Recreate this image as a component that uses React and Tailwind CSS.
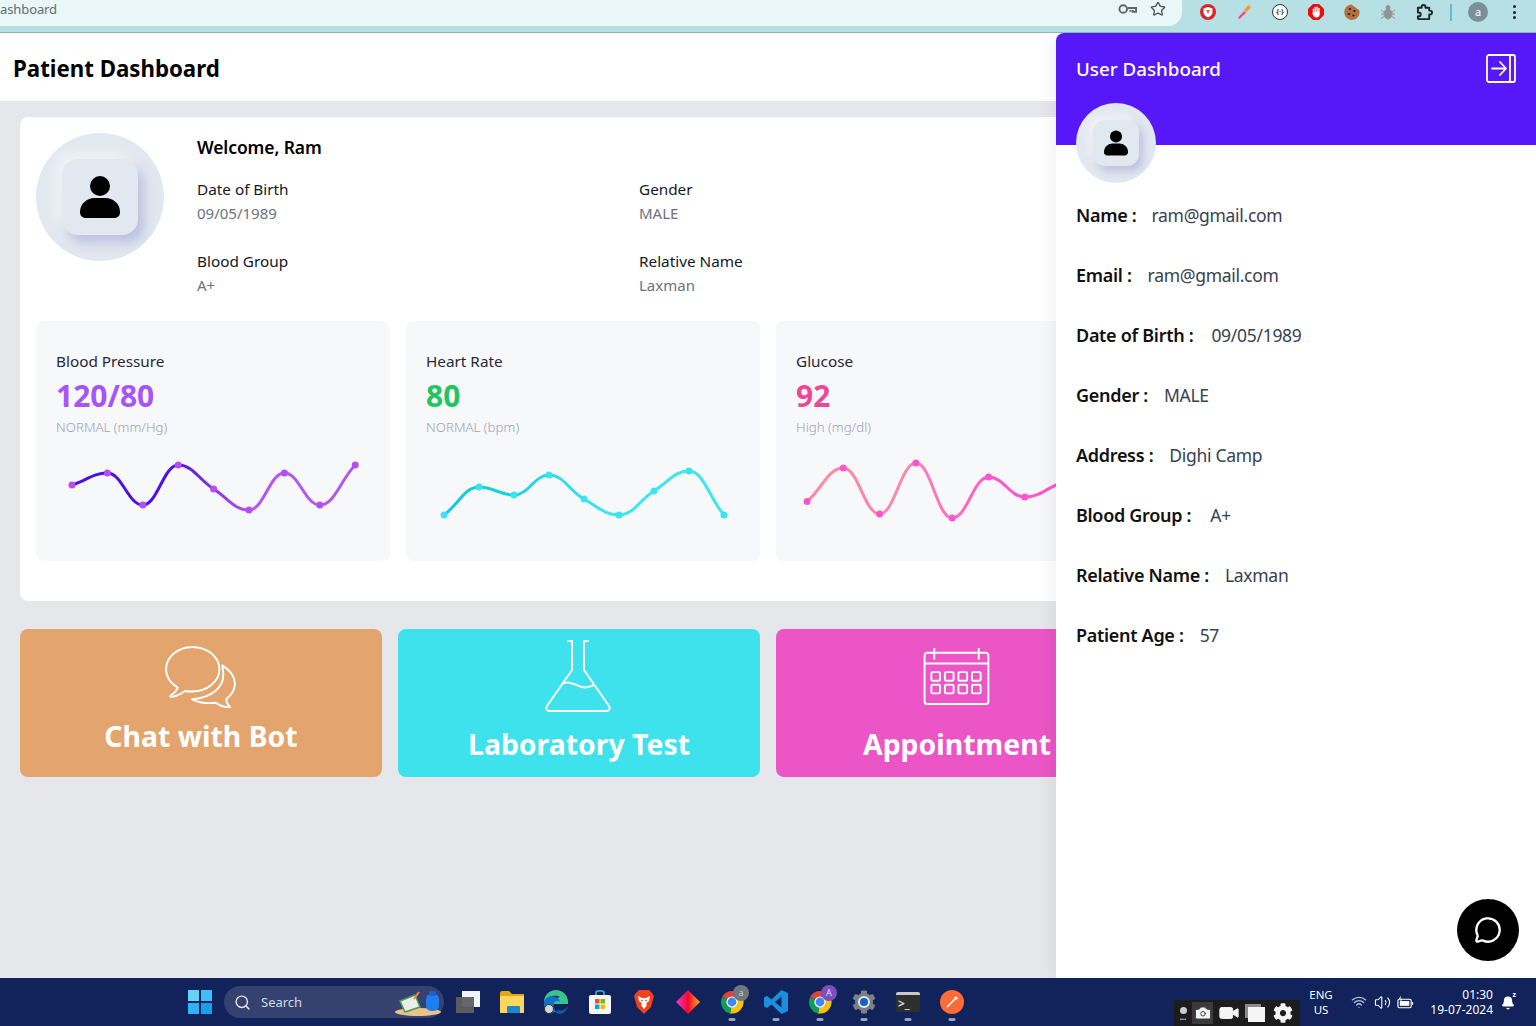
import React from "react";
import { Star, Search, MessageCircle, Video, Camera, Volume2, Wifi, Bell } from "lucide-react";
import { FaCog } from "react-icons/fa";

function smooth(pts) {
  const n = pts.length;
  const d = [];
  const s = [];
  for (let i = 0; i < n - 1; i++) s.push((pts[i + 1][1] - pts[i][1]) / (pts[i + 1][0] - pts[i][0]));
  for (let i = 0; i < n; i++) {
    if (i === 0) d.push(s[0] * 0.9);
    else if (i === n - 1) d.push(s[n - 2] * 0.9);
    else if (s[i - 1] * s[i] <= 0) d.push(0);
    else d.push((2 * s[i - 1] * s[i]) / (s[i - 1] + s[i]));
  }
  let p = `M${pts[0][0]} ${pts[0][1]}`;
  for (let i = 0; i < n - 1; i++) {
    const h = (pts[i + 1][0] - pts[i][0]) / 2.4;
    p += ` C${pts[i][0] + h} ${pts[i][1] + d[i] * h} ${pts[i + 1][0] - h} ${pts[i + 1][1] - d[i + 1] * h} ${pts[i + 1][0]} ${pts[i + 1][1]}`;
  }
  return p;
}

function Spark({ id, ys, x0, step, from, mid, to, dot, midAt = "0.35", endAt = "1" }) {
  const pts = ys.map((y, i) => [x0 + i * step, y - 450]);
  return (
    <svg width="314" height="80" viewBox="0 0 314 80" className="block overflow-visible mt-[13px]">
      <defs>
        <linearGradient id={id} gradientUnits="userSpaceOnUse" x1="0" x2="314" y1="0" y2="0">
          <stop offset="0" stopColor={from} />
          <stop offset={midAt} stopColor={mid} />
          <stop offset={endAt} stopColor={to} />
        </linearGradient>
      </defs>
      <path d={smooth(pts)} fill="none" stroke={`url(#${id})`} strokeWidth="3" strokeLinecap="round" />
      {pts.map((p, i) => (
        <circle key={i} cx={p[0]} cy={p[1]} r="3.5" fill={dot} />
      ))}
    </svg>
  );
}

function Person({ className }) {
  return (
    <svg viewBox="0 0 40 42" className={className} fill="#000">
      <circle cx="20" cy="10" r="10" />
      <path d="M0 36 C0 27 8 22 14 22 H26 C32 22 40 27 40 36 C40 39.5 38 42 34 42 H6 C2 42 0 39.5 0 36Z" />
    </svg>
  );
}

function Metric({ title, value, valueClass, note, children }) {
  return (
    <div className="h-[240px] rounded-lg bg-[#f7f8fa] px-5 pt-[28px]">
      <div className="text-[15.3px] leading-6 text-[#1f2937]">{title}</div>
      <div className={`text-[30px] leading-9 font-bold mt-[5px] ${valueClass}`}>{value}</div>
      <div className="text-[13.3px] leading-5 font-light text-[#9ca3af] mt-[3px]">{note}</div>
      {children}
    </div>
  );
}

function Field({ label, value }) {
  return (
    <div className="w-[442px]">
      <div className="text-[15.3px] leading-6 text-[#111827]">{label}</div>
      <div className="text-[15px] leading-6 text-[#6b7280]">{value}</div>
    </div>
  );
}

function Row({ label, value, gap = "ml-4" }) {
  return (
    <div className="h-[60px] flex items-center">
      <span className="font-semibold text-[18px] tracking-[-0.3px] text-[#111]">{label}</span>
      <span className={`text-[#374151] text-[17.5px] tracking-[-0.3px] ${gap}`}>{value}</span>
    </div>
  );
}

function Dot() {
  return <span className="absolute left-1/2 -translate-x-1/2 bottom-[5px] w-[7px] h-[3px] rounded-full bg-[#9aa3bd]" />;
}

function Slot({ children, dot }) {
  return (
    <div className="relative w-[44px] h-[48px] flex items-center justify-center">
      {children}
      {dot && <Dot />}
    </div>
  );
}

function Chrome({ badge, badgeClass }) {
  return (
    <div className="relative w-6 h-6">
      <svg viewBox="0 0 24 24" className="w-6 h-6">
        <path d="M12 12 L2.2 7 A11.5 11.5 0 0 1 22.3 7Z" fill="#db4437" />
        <path d="M12 12 L22.3 7 A11.5 11.5 0 0 1 10 23.4Z" fill="#f4c20d" />
        <path d="M12 12 L10 23.4 A11.5 11.5 0 0 1 2.2 7Z" fill="#0f9d58" />
        <circle cx="12" cy="12" r="5.6" fill="#fff" />
        <circle cx="12" cy="12" r="4.4" fill="#4285f4" />
      </svg>
      <span className={`absolute -top-[5px] -right-[5px] w-4 h-4 rounded-full text-[9px] leading-4 text-center ${badgeClass}`}>{badge}</span>
    </div>
  );
}

function BrowserBar() {
  return (
    <div className="h-[33px] shrink-0 bg-[#b7e0e4] border-b border-[#8fb5b8] flex items-start">
      <div className="w-[1182px] h-[26px] bg-[#eaf7f8] rounded-br-[14px] flex items-start justify-between pr-[16px]">
        <span className="text-[13px] leading-[19px] text-[#5f6d70] tracking-[-0.1px]">ashboard</span>
        <div className="flex items-center gap-[13px] h-[18px]">
          <svg viewBox="0 0 20 12" className="w-[19px] h-[12px]" fill="none" stroke="#5f6368" strokeWidth="2">
            <circle cx="5.5" cy="6" r="4" />
            <path d="M10 5 H19 V9 H15.5 V7 M13 7 V9" />
          </svg>
          <Star size={16} strokeWidth={2} color="#4f5458" />
        </div>
      </div>
      <div className="flex-1 h-[33px] flex items-center pl-[8px] pb-[9px]">
        <div className="w-[36px] flex justify-center">
          <svg viewBox="0 0 16 16" className="w-4 h-4">
            <circle cx="8" cy="8" r="8" fill="#d9252b" />
            <path d="M3.500 4.500 L8 3 L12.500 4.500 V8.500 C12.500 10.500 10 12.500 8 13.500 C6 12.500 3.500 10.500 3.500 8.500Z" fill="#fff" />
            <path d="M6 6 H10 L8 10Z" fill="#e25a5e" />
          </svg>
        </div>
        <div className="w-[36px] flex justify-center">
          <svg viewBox="0 0 16 16" className="w-4 h-4">
            <path d="M2.500 13 L8 7 L10 9 L4 14.500 L2.500 15Z" fill="#f7468f" />
            <path d="M8 6 L11.500 2 C13 0.500 15.500 3 14 4.500 L10 8.500Z" fill="#f59b1f" />
          </svg>
        </div>
        <div className="w-[36px] flex justify-center">
          <div className="w-4 h-4 rounded-full bg-white border border-[#333] text-[7px] leading-[13px] text-center font-bold text-[#333]">{"{·}"}</div>
        </div>
        <div className="w-[36px] flex justify-center">
          <svg viewBox="0 0 16 16" className="w-4 h-4">
            <path d="M5 0 H11 L16 5 V11 L11 16 H5 L0 11 V5Z" fill="#e60f0f" />
            <g fill="#fff">
              <rect x="4.800" y="4.500" width="1.400" height="6" rx="0.700" />
              <rect x="6.600" y="2.800" width="1.400" height="7" rx="0.700" />
              <rect x="8.400" y="2.500" width="1.400" height="7" rx="0.700" />
              <rect x="10.200" y="3.800" width="1.400" height="6" rx="0.700" />
              <path d="M4.800 8 H11.600 V10.500 C11.600 12.500 10.500 13.500 8.500 13.500 C6.500 13.500 5.500 12.500 4.800 10.500Z" />
            </g>
          </svg>
        </div>
        <div className="w-[36px] flex justify-center">
          <svg viewBox="0 0 16 16" className="w-4 h-4">
            <path d="M8 0.500 C9 3 11 2 11.500 3.500 C12 5 15 4.500 15.500 7 A7.700 7.700 0 1 1 8 0.500Z" fill="#b5703f" />
            <g fill="#231a14">
              <circle cx="6" cy="5" r="1.100" /><circle cx="10.500" cy="7" r="1.100" /><circle cx="5" cy="10" r="1.100" /><circle cx="9.500" cy="11.500" r="1.100" />
            </g>
          </svg>
        </div>
        <div className="w-[36px] flex justify-center">
          <svg viewBox="0 0 16 16" className="w-4 h-4" stroke="#8f9597" strokeWidth="1" fill="#8f9597">
            <ellipse cx="8" cy="10" rx="4" ry="5" />
            <circle cx="8" cy="3.500" r="2" />
            <path d="M1 6 L4 8 M1 10 H4 M1 14.500 L4 12.500 M15 6 L12 8 M15 10 H12 M15 14.500 L12 12.500" fill="none" />
          </svg>
        </div>
        <div className="w-[36px] flex justify-center">
          <svg viewBox="0 0 18 18" className="w-[17px] h-[17px]" fill="none" stroke="#1c2526" strokeWidth="2" strokeLinejoin="round">
            <path d="M2 4 H6 V3 A2 2 0 0 1 10 3 V4 H14 V7 H15 A2 2 0 0 1 15 11 H14 V16 H3 Q2 16 2 15 V13 H3 A2 2 0 0 0 3 9 H2Z" />
          </svg>
        </div>
        <div className="w-[2px] h-[17px] bg-[#5ebfc8] ml-[8px]" />
        <div className="ml-[16px] w-5 h-5 rounded-full bg-[#7a8f99] text-white text-[11px] leading-5 text-center">a</div>
        <div className="ml-[25px] flex flex-col gap-[2.5px]">
          <span className="w-[3px] h-[3px] rounded-full bg-[#1c2526]" />
          <span className="w-[3px] h-[3px] rounded-full bg-[#1c2526]" />
          <span className="w-[3px] h-[3px] rounded-full bg-[#1c2526]" />
        </div>
      </div>
    </div>
  );
}

function Taskbar() {
  return (
    <div className="relative h-[48px] shrink-0 bg-[#12225b] text-white flex items-center">
      <div className="ml-[188px] w-6 h-6 grid grid-cols-2 gap-[1.5px]">
        <span className="bg-[#63d3f9]" /><span className="bg-[#3fbdf5]" /><span className="bg-[#2fb2f3]" /><span className="bg-[#1a9df0]" />
      </div>
      <div className="ml-[12px] w-[220px] h-[32px] rounded-full bg-[#35426f] flex items-center pl-[10px] relative">
        <Search size={17} color="#e5e7eb" strokeWidth={2} />
        <span className="ml-[10px] text-[13px] leading-[32px] text-[#d5d9e4]">Search</span>
        <svg viewBox="0 0 50 32" className="absolute right-0 top-0 w-[50px] h-[32px]">
          <ellipse cx="24" cy="26" rx="23" ry="4" fill="#e8c48a" />
          <path d="M6 15 L21 9 L26 21 L11 26Z" fill="#e9efe6" stroke="#4f9a55" strokeWidth="1.5" />
          <path d="M20 13 L25 6" stroke="#ef8a3c" strokeWidth="2" />
          <rect x="32" y="8" width="13" height="17" rx="5" fill="#1f7df0" />
          <rect x="35" y="5" width="7" height="5" rx="2" fill="#1b5fd0" />
        </svg>
      </div>
      <div className="ml-[2px] flex">
        <Slot>
          <div className="relative w-6 h-6">
            <span className="absolute right-0 top-[1px] w-[18px] h-[16px] bg-[#f3f4f6]" />
            <span className="absolute left-0 bottom-[1px] w-[18px] h-[16px] bg-[#5e5f62]/95" />
          </div>
        </Slot>
        <Slot>
          <svg viewBox="0 0 24 22" className="w-6 h-[22px]">
            <path d="M0 2 Q0 0 2 0 H9 L12 3 H24 V20 Q24 22 22 22 H2 Q0 22 0 20Z" fill="#e2a616" />
            <rect x="0" y="5" width="24" height="17" rx="1" fill="#fbd75b" />
            <rect x="7" y="15" width="13" height="7" rx="1" fill="#1a88d4" />
          </svg>
        </Slot>
        <Slot>
          <div className="relative w-6 h-6">
            <svg viewBox="0 0 24 24" className="w-6 h-6">
              <path d="M12 0 A12 12 0 0 1 24 12 V14 H9 C9 8 16 7 16 7 C13 5 4 5 0 12 A12 12 0 0 1 12 0Z" fill="#37c58a" />
              <path d="M0 12 C2 5 14 4 16 12 C11 9 7 14 12 22 C5 24 -1 19 0 12Z" fill="#1171c9" />
              <path d="M14 20 C18 22 22 19 24 16 C22 24 14 26 12 22Z" fill="#0f5fa8" />
            </svg>
            <span className="absolute left-[0px] bottom-[0px] w-[10px] h-[10px] rounded-full bg-[#d7d7d7] border border-[#333]" />
          </div>
        </Slot>
        <Slot>
          <svg viewBox="0 0 22 24" className="w-[22px] h-6">
            <path d="M7 6 V3 Q7 1 9 1 H13 Q15 1 15 3 V6" fill="none" stroke="#2eb4e8" strokeWidth="1.6" />
            <rect x="0" y="5" width="22" height="19" rx="2" fill="#f6f6f6" />
            <rect x="6" y="9" width="4.5" height="4.5" fill="#f25022" />
            <rect x="11.5" y="9" width="4.5" height="4.5" fill="#7fba00" />
            <rect x="6" y="14.5" width="4.5" height="4.5" fill="#00a4ef" />
            <rect x="11.5" y="14.5" width="4.5" height="4.5" fill="#ffb900" />
          </svg>
        </Slot>
        <Slot>
          <svg viewBox="0 0 20 24" className="w-5 h-6">
            <path d="M5 0 H15 L18 3 L20 6 L17 17 L10 24 L3 17 L0 6 L2 3Z" fill="#f1411f" />
            <path d="M4 6 L8 8 H12 L16 6 L15 11 L12.500 13 L12.500 16 L10 19 L7.500 16 L7.500 13 L5 11Z" fill="#fff" />
            <path d="M7 10 L9 11 M13 10 L11 11" stroke="#f1411f" strokeWidth="1" />
          </svg>
        </Slot>
        <Slot>
          <svg viewBox="0 0 24 24" className="w-6 h-6">
            <defs>
              <linearGradient id="dia" x1="0" x2="1" y1="0" y2="0">
                <stop offset="0" stopColor="#e83ed0" /><stop offset="0.5" stopColor="#f5062f" /><stop offset="1" stopColor="#ffb21a" />
              </linearGradient>
            </defs>
            <path d="M12 0 L24 12 L12 24 L0 12Z" fill="url(#dia)" />
          </svg>
        </Slot>
        <Slot dot><Chrome badge="a" badgeClass="bg-[#6f7780] text-[#c8ccd0]" /></Slot>
        <Slot dot>
          <svg viewBox="0 0 24 24" className="w-6 h-6">
            <path d="M17.5 0 L24 3 V21 L17.5 24 L7.5 14.5 L3 18 L0 16.5 V7.5 L3 6 L7.5 9.5Z M17.5 6.5 L11 12 L17.500 17.5Z" fillRule="evenodd" fill="#1c8ede" />
          </svg>
        </Slot>
        <Slot dot><Chrome badge="A" badgeClass="bg-[#7b4fc0] text-[#e4dcf5]" /></Slot>
        <Slot dot>
          <div className="relative w-6 h-6 flex items-center justify-center">
            <FaCog size={24} color="#7a8088" />
            <span className="absolute w-[12px] h-[12px] rounded-full bg-[#1663c0] border-2 border-[#e4e7eb]" />
          </div>
        </Slot>
        <Slot dot>
          <div className="w-6 h-5 rounded-[2px] bg-[#2e2e2e] border-t-[3px] border-[#c9c9c9] flex items-center pl-[2px] text-[12px] leading-none font-bold text-[#ddd]">&gt;_</div>
        </Slot>
        <Slot dot>
          <div className="w-6 h-6 rounded-full bg-[#ff6c37] flex items-center justify-center">
            <svg viewBox="0 0 16 16" className="w-4 h-4" stroke="#fff" strokeWidth="1.6" fill="none">
              <path d="M3 13 L12 4" />
              <path d="M11 3 L13 5" strokeWidth="2.4" />
            </svg>
          </div>
        </Slot>
      </div>
      <div className="ml-auto flex items-center h-full text-white">
        <div className="w-[32px] text-center text-[11.5px] leading-[15px] mr-[14px]">
          <div>ENG</div>
          <div>US</div>
        </div>
        <Wifi size={16} color="#b4c1da" strokeWidth={2} />
        <Volume2 size={17} strokeWidth={1.5} className="ml-[7px]" />
        <svg viewBox="0 0 18 13" className="w-[17px] h-[13px] ml-[6px]" fill="none" stroke="#fff" strokeWidth="1.2">
          <rect x="1" y="3" width="14" height="9" rx="1.5" />
          <rect x="3" y="5" width="10" height="5" fill="#fff" stroke="none" />
          <path d="M16.5 6 V9" />
          <path d="M4 0 L2.500 3 H5 L3.500 6" strokeWidth="1" />
        </svg>
        <div className="ml-[7px] w-[72px] text-right text-[12px] leading-[15px]">
          <div>01:30</div>
          <div>19-07-2024</div>
        </div>
        <div className="relative ml-[8px] mr-[21px] w-[14px] h-[16px]">
          <Bell size={14} strokeWidth={2} fill="#fff" className="absolute left-0 bottom-0" />
          <span className="absolute -right-[1px] -top-[3px] text-[7px] leading-[8px] font-bold">z</span>
        </div>
      </div>
      <div className="absolute left-[1174px] top-[22px] w-[126px] h-[26px] rounded-t-[3px] bg-[#1c1c1c] flex items-center">
        <div className="w-[18px] flex flex-col items-center">
          <span className="w-[7px] h-[7px] rounded-full bg-[#ccc]" />
          <span className="text-[8px] leading-[6px] text-[#ddd] font-bold">...</span>
        </div>
        <div className="w-[21px] h-[22px] bg-[#3a3a3a] flex items-center justify-center">
          <Camera size={18} color="#3a3a3a" fill="#f2f2f2" strokeWidth={1.2} />
        </div>
        <Video size={22} color="#f5f5f5" fill="#f5f5f5" strokeWidth={1} className="ml-[5px]" />
        <div className="relative w-[20px] h-[18px] ml-[5px]">
          <span className="absolute left-0 top-0 w-[16px] h-[14px] bg-[#8a8a8a]" />
          <span className="absolute right-0 bottom-0 w-[17px] h-[15px] bg-[#f5f5f5]" />
        </div>
        <FaCog size={20} color="#f5f5f5" className="ml-[8px]" />
      </div>
    </div>
  );
}

function ActionCard({ bg, label, children, top, gap }) {
  return (
    <div className={`h-[148px] rounded-lg ${bg} flex flex-col items-center ${top}`}>
      {children}
      <div className={`text-[28.4px] leading-9 font-bold text-white ${gap}`}>{label}</div>
    </div>
  );
}

export default function App() {
  return (
    <div className="h-[1026px] w-[1536px] overflow-hidden flex flex-col font-['Noto_Sans',sans-serif]">
      <BrowserBar />
      <div className="relative flex-1 min-h-0 bg-[#e5e7eb] overflow-hidden">
        <div className="h-[68px] bg-white flex items-center pl-[13px] pt-[3px]">
          <h1 className="text-[22.25px] font-bold text-black">Patient Dashboard</h1>
        </div>
        <div className="px-5 pt-4">
          <div className="h-[484px] rounded-lg bg-white p-4">
            <div className="flex h-[188px]">
              <div className="w-[128px] h-[128px] rounded-full bg-[#e2e8f0] flex items-center justify-center shrink-0 overflow-hidden">
                <div className="w-[76px] h-[76px] rounded-2xl bg-[#e2e8f0] shadow-[6px_8px_12px_rgba(150,155,210,0.5),-6px_-6px_14px_rgba(255,255,255,0.6)] flex items-center justify-center">
                  <Person className="w-10 h-[42px]" />
                </div>
              </div>
              <div className="ml-[33px] flex-1">
                <div className="text-[17.5px] leading-[28px] font-semibold text-black tracking-[-0.1px]">Welcome, Ram</div>
                <div className="flex mt-[16px]">
                  <Field label="Date of Birth" value="09/05/1989" />
                  <Field label="Gender" value="MALE" />
                </div>
                <div className="flex mt-[24px]">
                  <Field label="Blood Group" value="A+" />
                  <Field label="Relative Name" value="Laxman" />
                </div>
              </div>
            </div>
            <div className="grid grid-cols-4 gap-4">
              <Metric title="Blood Pressure" value="120/80" valueClass="text-[#a855f7]" note="NORMAL (mm/Hg)">
                <Spark id="g1" ys={[485, 473, 505, 465, 489, 510, 473, 505, 465]} x0={16} step={35.4} from="#4a10e0" mid="#4f12e2" to="#b556f0" dot="#b44ff0" midAt="0.38" endAt="0.62" />
              </Metric>
              <Metric title="Heart Rate" value="80" valueClass="text-[#22c55e]" note="NORMAL (bpm)">
                <Spark id="g2" ys={[515, 487, 495, 475, 499, 515, 491, 471, 515]} x0={18} step={35} from="#12c6d8" mid="#1fd2e2" to="#3fe6f2" dot="#3de4ef" midAt="0.3" endAt="0.6" />
              </Metric>
              <Metric title="Glucose" value="92" valueClass="text-[#ec4899]" note="High (mg/dl)">
                <Spark id="g3" ys={[501.5, 468, 514, 463, 518, 477, 497, 483]} x0={11} step={36.3} from="#ff8aa0" mid="#ff86a8" to="#ff55d0" dot="#ff55d0" midAt="0.35" endAt="0.65" />
              </Metric>
              <div />
            </div>
          </div>
          <div className="grid grid-cols-4 gap-4 mt-7">
            <ActionCard bg="bg-[#e3a56d]" label="Chat with Bot" top="pt-[15px]" gap="mt-[10px]">
              <svg viewBox="0 0 76 66" className="w-[76px] h-[64px] -translate-x-[1px]" fill="none" stroke="#fff" strokeWidth="2" strokeLinejoin="round">
                <path d="M15 45 C7 40 3 33 3 26 C3 13 16 3 30 3 C45 3 58 13 58 26 C58 39 45 49 30 49 C27 49 24.500 49 22.500 48.500 C19 51 14 54 9 54.500 C7 54.500 7 54 8 53 C11 51 14 48 15 45Z" />
                <path d="M61 22 C69 27 74 34 74 41 C74 47 70 53 65 57 C65 60 67 63 69 65 C63 66 59 64 54 60.500 C43 62 36 60 30 57 C50 55 63 45 62 30Z" />
              </svg>
            </ActionCard>
            <ActionCard bg="bg-[#3de2ed]" label="Laboratory Test" top="pt-[11px]" gap="mt-[14px]">
              <svg viewBox="0 0 66 72" className="w-[66px] h-[72px] -translate-x-[1px]" fill="none" stroke="#fff" strokeWidth="2" strokeLinejoin="round" strokeLinecap="round">
                <path d="M23 1 H27 V30 L2 66 Q0 70 4 71 H62 Q66 70 64 66 L39 30 V1 H43" />
                <path d="M17 44 C24 40 30 45 37 47 C41 48 45 47 49 45" />
              </svg>
            </ActionCard>
            <ActionCard bg="bg-[#ec55c6]" label="Appointment" top="pt-[18px]" gap="mt-[21px]">
              <svg viewBox="0 0 68 60" className="w-[67px] h-[58px] -translate-x-[1px]" fill="none" stroke="#fff" strokeWidth="2">
                <rect x="1" y="6" width="66" height="53" rx="3" />
                <path d="M1 17 H67 M11 1 V13 M57 1 V13" />
                <g>
                  <rect x="8" y="26" width="9" height="9" rx="1.500" /><rect x="22" y="26" width="9" height="9" rx="1.500" /><rect x="36" y="26" width="9" height="9" rx="1.500" /><rect x="50" y="26" width="9" height="9" rx="1.500" />
                  <rect x="8" y="39" width="9" height="9" rx="1.500" /><rect x="22" y="39" width="9" height="9" rx="1.500" /><rect x="36" y="39" width="9" height="9" rx="1.500" /><rect x="50" y="39" width="9" height="9" rx="1.500" />
                </g>
              </svg>
            </ActionCard>
            <div />
          </div>
        </div>

        <aside className="absolute right-0 top-0 bottom-0 w-[480px] bg-white rounded-tl-lg shadow-[-6px_0_16px_rgba(0,0,0,0.05)]">
          <div className="h-[112px] bg-[#5718f9] rounded-tl-lg flex items-start justify-between pl-5 pr-5 pt-[21px]">
            <h2 className="text-[18.75px] leading-[30px] font-medium text-white">User Dashboard</h2>
            <svg viewBox="0 0 30 29" className="w-[30px] h-[29px]" fill="none" stroke="#fff" strokeWidth="1.8" strokeLinecap="round" strokeLinejoin="round">
              <rect x="1" y="1" width="28" height="27" rx="2" />
              <path d="M24 1 V28 M6 14.500 H19 M14 8 L20 14.500 L14 21" />
            </svg>
          </div>
          <div className="pl-5 -mt-[42px]">
            <div className="w-20 h-20 rounded-full bg-[#e2e8f0] flex items-center justify-center overflow-hidden">
              <div className="w-[46px] h-[46px] rounded-xl bg-[#e2e8f0] shadow-[4px_5px_8px_rgba(150,155,210,0.5),-4px_-4px_9px_rgba(255,255,255,0.6)] flex items-center justify-center">
                <Person className="w-6 h-[28px]" />
              </div>
            </div>
            <div className="mt-[2px]">
              <Row label="Name :" value="ram@gmail.com" gap="ml-[15px]" />
              <Row label="Email :" value="ram@gmail.com" />
              <Row label="Date of Birth :" value="09/05/1989" gap="ml-[18px]" />
              <Row label="Gender :" value="MALE" />
              <Row label="Address :" value="Dighi Camp" />
              <Row label="Blood Group :" value="A+" gap="ml-[19px]" />
              <Row label="Relative Name :" value="Laxman" />
              <Row label="Patient Age :" value="57" gap="ml-[16px]" />
            </div>
          </div>
          <div className="absolute right-[17px] bottom-[17px] w-[62px] h-[62px] rounded-full bg-black flex items-center justify-center">
            <MessageCircle size={28} color="#fff" strokeWidth={2} />
          </div>
        </aside>
      </div>
      <Taskbar />
    </div>
  );
}
